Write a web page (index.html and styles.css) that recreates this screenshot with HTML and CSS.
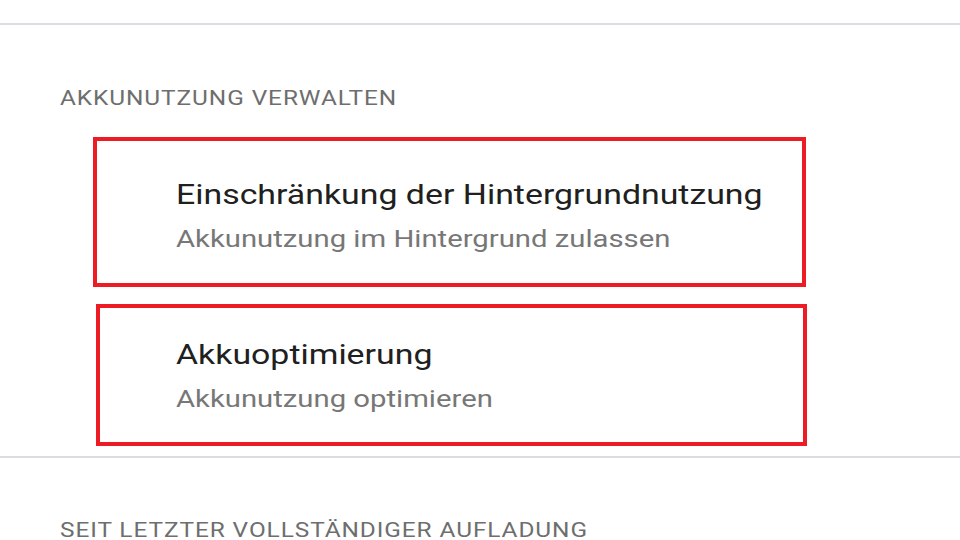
FILE: index.html
```html
<!DOCTYPE html>
<html lang="de">
<head>
<meta charset="utf-8">
<title>Akkunutzung</title>
<link rel="stylesheet" href="styles.css">
</head>
<body>
  <div class="divider divider-top"></div>
  <h2 class="section-header header-manage">AKKUNUTZUNG VERWALTEN</h2>
  <div class="list">
    <div class="item item-first">
      <div class="item-title">Einschränkung der Hintergrundnutzung</div>
      <div class="item-summary">Akkunutzung im Hintergrund zulassen</div>
      <span class="mark mark-first"></span>
    </div>
    <div class="item item-second">
      <div class="item-title">Akkuoptimierung</div>
      <div class="item-summary">Akkunutzung optimieren</div>
      <span class="mark mark-second"></span>
    </div>
  </div>
  <div class="divider divider-bottom"></div>
  <h2 class="section-header header-since">SEIT LETZTER VOLLSTÄNDIGER AUFLADUNG</h2>
</body>
</html>
```
FILE: styles.css
```css
html, body {
  margin: 0;
  padding: 0;
  background: #ffffff;
  width: 960px;
  height: 540px;
  overflow: hidden;
}

body {
  font-family: Roboto, "Liberation Sans", sans-serif;
}

.divider {
  height: 2px;
  background: #dcdde1;
}

.divider-top {
  margin-top: 23px;
}

/* the source screenshot is stretched horizontally */
.section-header,
.item-title,
.item-summary {
  width: max-content;
  transform-origin: 0 0;
  transform: scaleX(1.22);
  white-space: nowrap;
}

.section-header {
  margin: 0 0 0 60px;
  font-size: 20px;
  line-height: 24px;
  font-weight: 400;
  letter-spacing: 0.75px;
  color: #6e6e6e;
}

.header-manage {
  margin-top: 61px;
}

.list {
  padding-top: 67px;
}

.item {
  position: relative;
  height: 160px;
  box-sizing: border-box;
  padding-left: 176px;
}

.item-second {
  height: 119px;
}

.item-title {
  font-size: 27.75px;
  line-height: 36px;
  color: #202020;
}

.item-summary {
  margin-top: 10px;
  font-size: 24px;
  line-height: 32px;
  color: #777777;
}

.mark {
  position: absolute;
  border: 4px solid #ed1c24;
  box-sizing: border-box;
  pointer-events: none;
}

.mark-first {
  left: 93px;
  width: 713px;
  top: -40px;
  height: 150px;
}

.mark-second {
  left: 96px;
  width: 711px;
  top: -33px;
  height: 142px;
}

.header-since {
  margin-top: 62px;
  line-height: 20px;
}
```
